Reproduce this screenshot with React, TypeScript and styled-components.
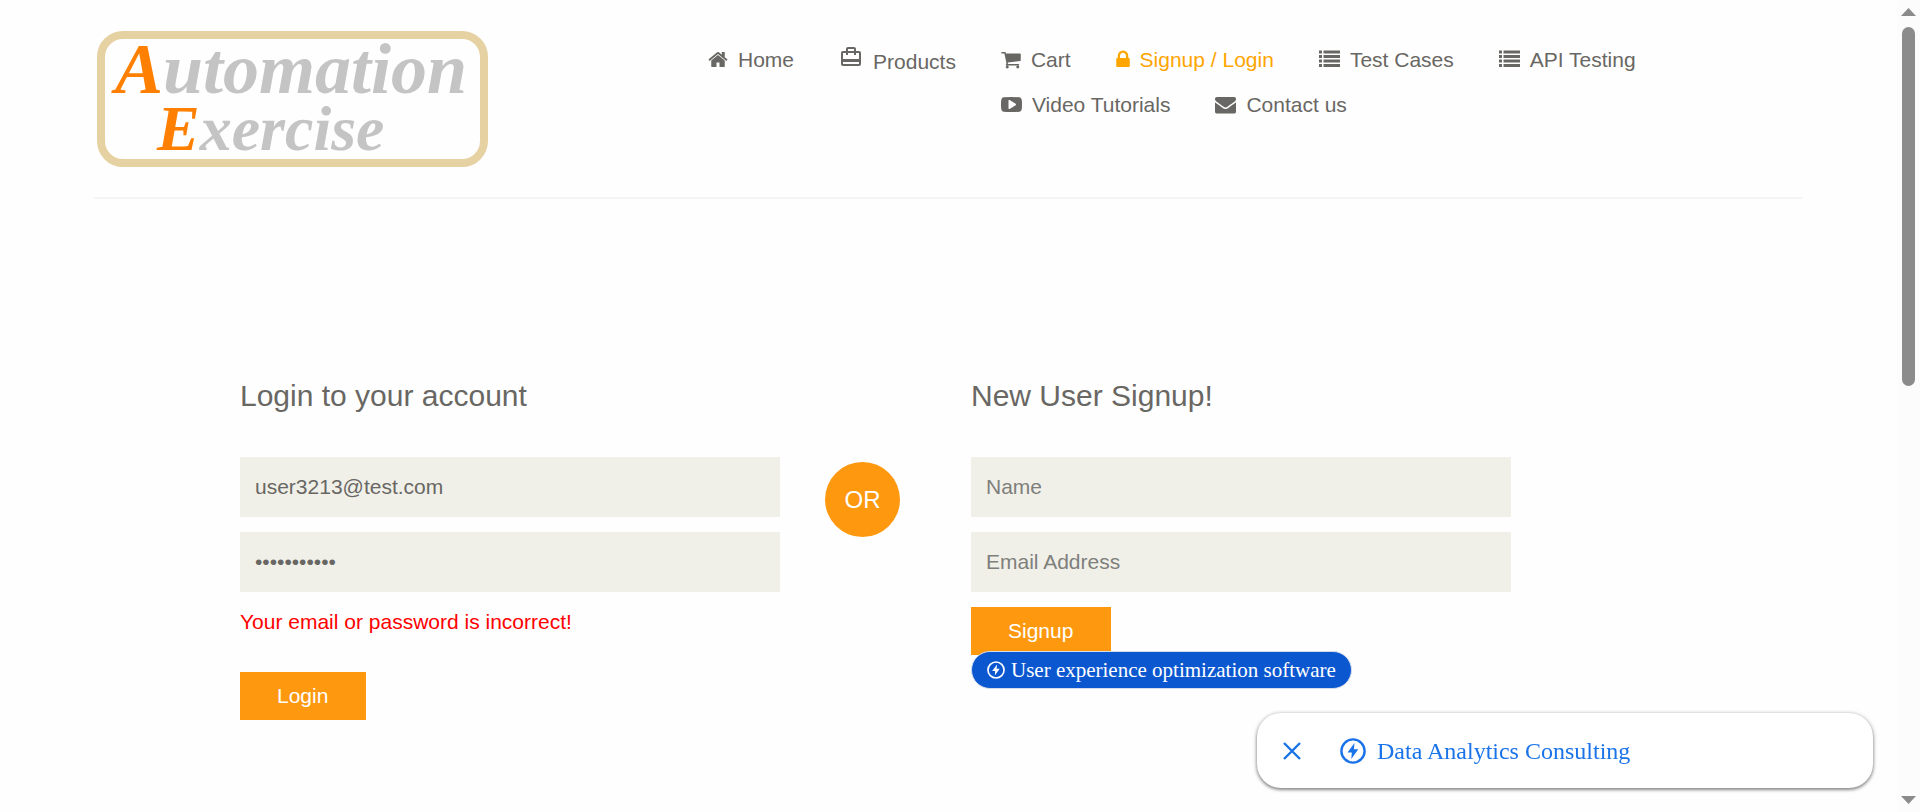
import React from "react";
import styled, { createGlobalStyle } from "styled-components";
import { MdCardTravel } from "react-icons/md";

const GlobalStyle = createGlobalStyle`
  *, *::before, *::after { box-sizing: border-box; }
  body {
    margin: 0;
    background: #fefefe;
    color: #696763;
    font-family: "Liberation Sans", Arial, sans-serif;
    font-size: 21px;
    line-height: 30px;
  }
`;

const Page = styled.div`
  padding: 0 46px 72px 23px;
`;

const Container = styled.div`
  max-width: 1709px;
  margin: 0 auto;
`;

const Header = styled.header`
  display: flex;
  align-items: flex-start;
  padding: 31px 0 30px;
  border-bottom: 2px solid #f5f5f5;
`;

const LogoColumn = styled.div`
  flex: 0 1 614px;
  padding-left: 3px;
`;

const Logo = styled.a`
  display: flex;
  flex-direction: column;
  width: 391px;
  height: 136px;
  padding-left: 10px;
  border: 8px solid #e6d1a2;
  border-radius: 26px;
  color: #c4c4c4;
  font-family: "Liberation Serif", serif;
  font-style: italic;
  font-weight: 700;
  text-decoration: none;
  white-space: nowrap;
`;

const LogoLine = styled.span<{ $size: number; $indent?: number }>`
  display: block;
  padding-left: ${(p) => p.$indent ?? 0}px;
  font-size: ${(p) => p.$size}px;
  line-height: 60px;

  &::first-letter { color: #ff8000; }
`;

const Nav = styled.nav`
  display: flex;
  flex: 1;
  gap: 45px;
  padding-top: 14px;
`;

const NavList = styled.ul<{ $wrap?: boolean }>`
  display: flex;
  flex-wrap: ${(p) => (p.$wrap ? "wrap" : "nowrap")};
  align-items: flex-start;
  align-content: flex-start;
  gap: 15px 45px;
  margin: 0;
  padding: 0;
  list-style: none;
`;

const NavLink = styled.a<{ $active?: boolean }>`
  display: flex;
  align-items: center;
  gap: 10px;
  color: ${(p) => (p.$active ? "#ffa500" : "#696763")};
  text-decoration: none;
  white-space: nowrap;

  svg { flex: none; margin-bottom: 1px; fill: currentColor; }
`;

const ProductsLink = styled(NavLink)`
  align-items: flex-start;

  span { padding-top: 2px; }
`;

const Forms = styled.main`
  display: flex;
  align-items: flex-start;
  padding: 180px 0 0 146px;
`;

const Form = styled.form`
  display: flex;
  flex: 0 1 540px;
  flex-direction: column;
  align-items: flex-start;
  gap: 15px;
  min-width: 0;
`;

const Title = styled.h2`
  margin: 0 0 30px;
  font-size: 30px;
  font-weight: 400;
  line-height: 33px;
`;

const Field = styled.input`
  width: 100%;
  height: 60px;
  padding: 0 15px;
  border: 0;
  border-radius: 0;
  outline: 0;
  background: #f0f0e9;
  color: #696763;
  font: inherit;

  &::placeholder { color: #7f7f7c; opacity: 1; }
`;

const ErrorText = styled.p`
  margin: 0 0 20px;
  color: #ff0000;
`;

const Submit = styled.button`
  height: 48px;
  padding: 0 38px 0 37px;
  border: 0;
  background: #fe980f;
  color: #fff;
  font: inherit;
`;

const Or = styled.div`
  display: flex;
  flex: none;
  align-items: center;
  justify-content: center;
  width: 75px;
  height: 75px;
  margin: 83px 71px 0 45px;
  border-radius: 50%;
  background: #fe980f;
  color: #fff;
  font-size: 24px;
`;

const SignupFoot = styled.div`
  position: relative;
`;

const Pill = styled.a`
  position: absolute;
  top: 44px;
  left: 0;
  display: flex;
  align-items: center;
  gap: 6px;
  height: 38px;
  padding: 0 15px;
  border: 1px solid #d5dcec;
  border-radius: 19px;
  background: #0b57d0;
  color: #fff;
  font-family: "Liberation Serif", serif;
  font-size: 21px;
  text-decoration: none;
  white-space: nowrap;
`;

const Anchor = styled.aside`
  position: fixed;
  right: 47px;
  bottom: 24px;
  display: flex;
  align-items: center;
  width: 616px;
  height: 75px;
  padding-left: 26px;
  border-radius: 24px;
  background: #fff;
  box-shadow: 0 1px 4px rgba(0, 0, 0, 0.45), 0 2px 3px rgba(0, 0, 0, 0.2);
`;

const Close = styled.button`
  display: flex;
  margin: 0 39px 0 0;
  padding: 0;
  border: 0;
  background: none;
  color: #1a73e8;
`;

const AnchorLink = styled.a`
  display: flex;
  align-items: center;
  gap: 11px;
  color: #1a73e8;
  font-family: "Liberation Serif", serif;
  font-size: 24px;
  text-decoration: none;
  white-space: nowrap;
`;

const Scrollbar = styled.div`
  position: fixed;
  top: 0;
  right: 0;
  bottom: 0;
  display: flex;
  flex-direction: column;
  align-items: center;
  width: 23px;
  padding: 8px 0;
  background: #fcfcfc;

  svg { flex: none; fill: #8b8b8b; }
`;

const Track = styled.div`
  display: flex;
  flex: 1;
  flex-direction: column;
  padding: 11px 0;
`;

const Thumb = styled.div`
  flex: 0 0 47.4%;
  width: 13px;
  border-radius: 7px;
  background: #8b8b8b;
`;

const glyphs = {
  home: {
    width: 20,
    box: "64 0 1664 1792",
    path: "M1472 992v480q0 26-19 45t-45 19h-384v-384h-256v384h-384q-26 0-45-19t-19-45v-480q0-1 .5-3t.5-3l575-474 575 474q1 2 1 6zm223-69l-62 74q-8 9-21 11h-3q-13 0-21-7l-692-577-692 577q-12 8-24 7-13-2-21-11l-62-74q-8-10-7-23.5t11-21.5l719-599q32-26 76-26t76 26l244 204v-195q0-14 9-23t23-9h192q14 0 23 9t9 23v408l219 182q10 8 11 21.5t-7 23.5z",
  },
  cart: {
    width: 20,
    box: "64 0 1664 1792",
    path: "M704 1536q0 52-38 90t-90 38-90-38-38-90 38-90 90-38 90 38 38 90zm896 0q0 52-38 90t-90 38-90-38-38-90 38-90 90-38 90 38 38 90zm128-1088v512q0 24-16.500 42.500t-40.500 21.500l-1044 122q13 60 13 70 0 16-24 64h920q26 0 45 19t19 45-19 45-45 19h-1024q-26 0-45-19t-19-45q0-11 8-31.500t16-36 21.500-40 15.500-29.500l-177-823h-204q-26 0-45-19t-19-45 19-45 45-19h256q16 0 28.500 6.500t19.500 15.500 13 24.500 8 26 5.500 29.500 4.500 26h1201q26 0 45 19t19 45z",
  },
  lock: {
    width: 14,
    box: "320 0 1152 1792",
    path: "M640 768h512v-192q0-106-75-181t-181-75-181 75-75 181v192zm832 96v576q0 40-28 68t-68 28h-960q-40 0-68-28t-28-68v-576q0-40 28-68t68-28h32v-192q0-184 132-316t316-132 316 132 132 316v192h32q40 0 68 28t28 68z",
  },
  list: {
    width: 21,
    box: "0 0 1792 1792",
    path: "M0 128h256v256H0zM384 128h1408v256H384zM0 512h256v256H0zM384 512h1408v256H384zM0 896h256v256H0zM384 896h1408v256H384zM0 1280h256v256H0zM384 1280h1408v256H384z",
  },
  video: {
    width: 21,
    box: "0 0 1792 1792",
    path: "M1280 896q0-37-30-54l-512-320q-31-20-65-2-33 18-33 56v640q0 38 33 56 16 8 31 8 20 0 34-10l512-320q30-17 30-54zm512 0q0 96-1 150t-8.500 136.500-22.500 147.500q-16 73-69 123t-124 58q-222 25-671 25t-671-25q-71-8-124.500-58t-69.500-123q-14-65-21.500-147.500t-8.500-136.500-1-150 1-150 8.500-136.500 22.500-147.500q16-73 69-123t124-58q222-25 671-25t671 25q71 8 124.500 58t69.500 123q14 65 21.500 147.500t8.500 136.500 1 150z",
  },
  mail: {
    width: 21,
    box: "0 0 1792 1792",
    path: "M1792 710v794q0 66-47 113t-113 47h-1472q-66 0-113-47t-47-113v-794q44 49 101 87 362 246 497 345 57 42 92.500 65.500t94.500 48 110 24.500h2q51 0 110-24.500t94.500-48 92.500-65.500q170-123 498-345 57-39 100-87zm0-294q0 79-49 151t-122 123q-376 261-468 325-10 7-42.500 31t-54 38.500-52 32.500-57.500 27-50 9h-2q-23 0-50-9t-57.500-27-52-32.500-54-38.500-42.500-31q-91-64-262-182.500t-205-142.500q-62-42-117-115.500t-55-136.500q0-78 41.500-130t118.500-52h1472q65 0 112.500 47t47.500 113z",
  },
};

const Glyph = ({ name }: { name: keyof typeof glyphs }) => {
  const g = glyphs[name];
  return (
    <svg width={g.width} height="21" viewBox={g.box} aria-hidden="true">
      <path d={g.path} />
    </svg>
  );
};

const Bolt = ({ size }: { size: number }) => (
  <svg width={size} height={size} viewBox="0 0 26 26" aria-hidden="true">
    <circle cx="13" cy="13" r="11.600" fill="none" stroke="currentColor" strokeWidth="2.400" />
    <path d="M14.500 5L7.500 14.500h4.300L11.300 21l7-9.700h-4.400z" fill="currentColor" />
  </svg>
);

const menu: { label: string; icon: keyof typeof glyphs; active?: boolean }[] = [
  { label: "Cart", icon: "cart" },
  { label: "Signup / Login", icon: "lock", active: true },
  { label: "Test Cases", icon: "list" },
  { label: "API Testing", icon: "list" },
  { label: "Video Tutorials", icon: "video" },
  { label: "Contact us", icon: "mail" },
];

export default function App() {
  const stay = (e: React.FormEvent) => e.preventDefault();
  return (
    <>
      <GlobalStyle />
      <Page>
        <Container>
          <Header>
            <LogoColumn>
              <Logo href="#">
                <LogoLine $size={72}>Automation</LogoLine>
                <LogoLine $size={64} $indent={42}>Exercise</LogoLine>
              </Logo>
            </LogoColumn>
            <Nav>
              <NavList>
                <li>
                  <NavLink href="#"><Glyph name="home" />Home</NavLink>
                </li>
                <li>
                  <ProductsLink href="#"><MdCardTravel size={24} /><span>Products</span></ProductsLink>
                </li>
              </NavList>
              <NavList $wrap>
                {menu.map((m) => (
                  <li key={m.label}>
                    <NavLink href="#" $active={m.active}><Glyph name={m.icon} />{m.label}</NavLink>
                  </li>
                ))}
              </NavList>
            </Nav>
          </Header>
          <Forms>
            <Form onSubmit={stay}>
              <Title>Login to your account</Title>
              <Field type="email" aria-label="Email Address" placeholder="Email Address" defaultValue="user3213@test.com" />
              <Field type="password" aria-label="Password" placeholder="Password" defaultValue="password123" />
              <ErrorText>Your email or password is incorrect!</ErrorText>
              <Submit type="submit">Login</Submit>
            </Form>
            <Or>OR</Or>
            <Form onSubmit={stay}>
              <Title>New User Signup!</Title>
              <Field type="text" aria-label="Name" placeholder="Name" />
              <Field type="email" aria-label="Email Address" placeholder="Email Address" />
              <SignupFoot>
                <Submit type="submit">Signup</Submit>
                <Pill href="#"><Bolt size={18} />User experience optimization software</Pill>
              </SignupFoot>
            </Form>
          </Forms>
        </Container>
      </Page>
      <Anchor>
        <Close type="button" aria-label="Close">
          <svg width="18" height="18" viewBox="0 0 18 18" fill="none" stroke="currentColor" strokeWidth="2.400">
            <path d="M1 1l16 16M17 1L1 17" />
          </svg>
        </Close>
        <AnchorLink href="#"><Bolt size={26} />Data Analytics Consulting</AnchorLink>
      </Anchor>
      <Scrollbar aria-hidden="true">
        <svg width="15" height="8" viewBox="0 0 15 8"><path d="M7.500 0L15 8H0z" /></svg>
        <Track><Thumb /></Track>
        <svg width="15" height="8" viewBox="0 0 15 8"><path d="M0 0h15L7.500 8z" /></svg>
      </Scrollbar>
    </>
  );
}
